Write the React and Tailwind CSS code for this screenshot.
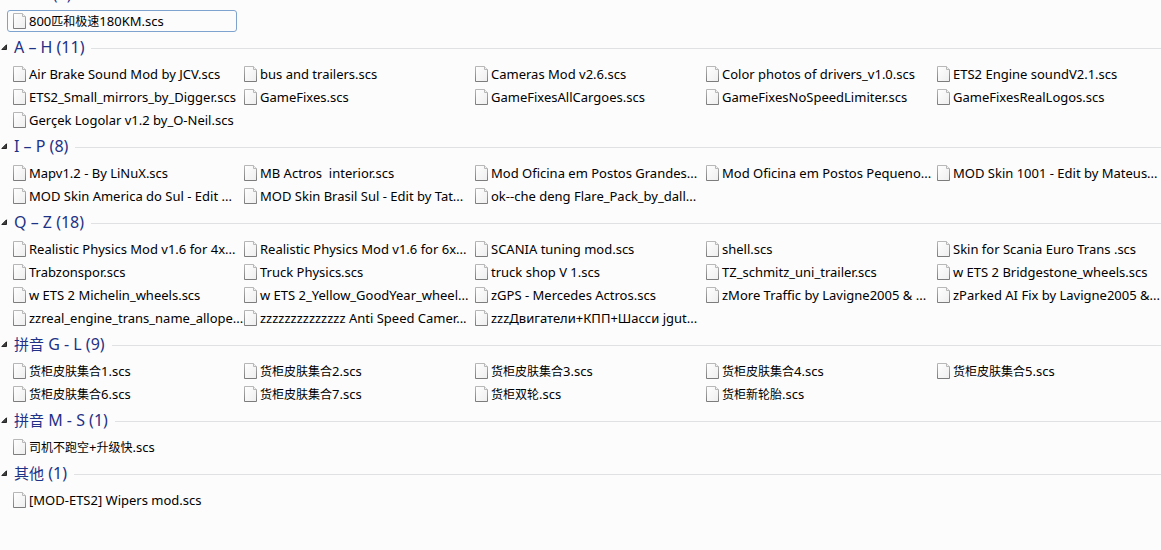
import React, { useState } from 'react';
import clsx from 'clsx';

const GROUPS = [
  { id: 'digits', label: '0 – 9', count: 1, files: ['800匹和极速180KM.scs'] },
  {
    id: 'a-h',
    label: 'A – H',
    count: 11,
    files: [
      'Air Brake Sound Mod by JCV.scs',
      'bus and trailers.scs',
      'Cameras Mod v2.6.scs',
      'Color photos of drivers_v1.0.scs',
      'ETS2 Engine soundV2.1.scs',
      'ETS2_Small_mirrors_by_Digger.scs',
      'GameFixes.scs',
      'GameFixesAllCargoes.scs',
      'GameFixesNoSpeedLimiter.scs',
      'GameFixesRealLogos.scs',
      'Gerçek Logolar v1.2 by_O-Neil.scs',
    ],
  },
  {
    id: 'i-p',
    label: 'I – P',
    count: 8,
    files: [
      'Mapv1.2 - By LiNuX.scs',
      'MB Actros  interior.scs',
      'Mod Oficina em Postos Grandes...',
      'Mod Oficina em Postos Pequeno...',
      'MOD Skin 1001 - Edit by Mateus...',
      'MOD Skin America do Sul - Edit ...',
      'MOD Skin Brasil Sul - Edit by Tat...',
      'ok--che deng Flare_Pack_by_dall...',
    ],
  },
  {
    id: 'q-z',
    label: 'Q – Z',
    count: 18,
    files: [
      'Realistic Physics Mod v1.6 for 4x...',
      'Realistic Physics Mod v1.6 for 6x...',
      'SCANIA tuning mod.scs',
      'shell.scs',
      'Skin for Scania Euro Trans .scs',
      'Trabzonspor.scs',
      'Truck Physics.scs',
      'truck shop V 1.scs',
      'TZ_schmitz_uni_trailer.scs',
      'w ETS 2 Bridgestone_wheels.scs',
      'w ETS 2 Michelin_wheels.scs',
      'w ETS 2_Yellow_GoodYear_wheel...',
      'zGPS - Mercedes Actros.scs',
      'zMore Traffic by Lavigne2005 & ...',
      'zParked AI Fix by Lavigne2005 &...',
      'zzreal_engine_trans_name_allope...',
      'zzzzzzzzzzzzzz Anti Speed Camer...',
      'zzzДвигатели+КПП+Шасси jgut...',
    ],
  },
  {
    id: 'pinyin-g-l',
    label: '拼音 G - L',
    count: 9,
    files: [
      '货柜皮肤集合1.scs',
      '货柜皮肤集合2.scs',
      '货柜皮肤集合3.scs',
      '货柜皮肤集合4.scs',
      '货柜皮肤集合5.scs',
      '货柜皮肤集合6.scs',
      '货柜皮肤集合7.scs',
      '货柜双轮.scs',
      '货柜新轮胎.scs',
    ],
  },
  { id: 'pinyin-m-s', label: '拼音 M - S', count: 1, files: ['司机不跑空+升级快.scs'] },
  { id: 'other', label: '其他', count: 1, files: ['[MOD-ETS2] Wipers mod.scs'] },
];

// Chinese runs are set one size smaller than the latin text around them
const MixedText = ({ text, cjkClass }) =>
  text.split(/([\u4e00-\u9fff]+)/).map((part, i) =>
    i % 2 ? <span key={i} className={cjkClass}>{part}</span> : part
  );

const FileIcon = () => (
  <svg width="13" height="16" viewBox="0 0 13 16" className="shrink-0" aria-hidden="true">
    <defs>
      <linearGradient id="page" x1="0" y1="0" x2="1" y2="1">
        <stop offset="0" stopColor="#ffffff" />
        <stop offset="1" stopColor="#eeeeee" />
      </linearGradient>
      <linearGradient id="edge" x1="0" y1="0" x2="0" y2="1">
        <stop offset="0" stopColor="#b8b8b8" />
        <stop offset="1" stopColor="#7c7c7c" />
      </linearGradient>
    </defs>
    <path d="M0.5 0.5H9.5L12.5 3.5V15.5H0.5Z" fill="url(#page)" stroke="url(#edge)" />
    <path d="M9.5 0.5V3.5H12.5" fill="#f2f2f2" stroke="#b8b8b8" />
  </svg>
);

const FileItem = ({ name, selected, onSelect }) => (
  <button
    type="button"
    onClick={onSelect}
    aria-pressed={selected}
    className={clsx(
      'flex h-[22px] items-center gap-[3px] rounded-[3px] border pl-[5px] text-left text-[13px] leading-5 whitespace-pre text-black focus:outline-none',
      selected ? 'border-[#7fa3cf]' : 'border-transparent'
    )}
  >
    <FileIcon />
    <span><MixedText text={name} cjkClass="text-[12px]" /></span>
  </button>
);

const FileGroup = ({ group, selected, onSelect }) => {
  const [open, setOpen] = useState(true);

  return (
    <section className="pb-[5px]">
      <h2 className="mb-1 flex h-[22px] items-center">
        <button
          type="button"
          onClick={() => setOpen(!open)}
          aria-expanded={open}
          className="flex shrink-0 items-center gap-1.5 pb-0.5 pl-px text-[16px] leading-5 whitespace-pre text-[#1e3287]"
        >
          <svg width="7" height="7" viewBox="0 0 7 7" className={clsx(!open && '-rotate-45')} aria-hidden="true">
            <path d="M5.5 0.8V5.5H0.8Z" fill="#404040" stroke="#262626" />
          </svg>
          <span><MixedText text={`${group.label} (${group.count})`} cjkClass="text-[15px]" /></span>
        </button>
        <span className="ml-[7px] h-px flex-1 bg-[#e0e1e2]" />
      </h2>
      {open && (
        <div className="grid grid-cols-[repeat(auto-fill,230px)] gap-px pl-[7px]">
          {group.files.map((name) => (
            <FileItem key={name} name={name} selected={selected === name} onSelect={() => onSelect(name)} />
          ))}
        </div>
      )}
    </section>
  );
};

const App = () => {
  const [selected, setSelected] = useState('800匹和极速180KM.scs');

  return (
    <div className="min-h-screen overflow-hidden bg-[#fcfcfc] font-['Noto_Sans','Noto_Sans_CJK_SC',sans-serif]">
      {/* list is scrolled a little, so the first header is mostly out of view */}
      <main className="-mt-4">
        {GROUPS.map((group) => (
          <FileGroup key={group.id} group={group} selected={selected} onSelect={setSelected} />
        ))}
      </main>
    </div>
  );
};

export default App;
